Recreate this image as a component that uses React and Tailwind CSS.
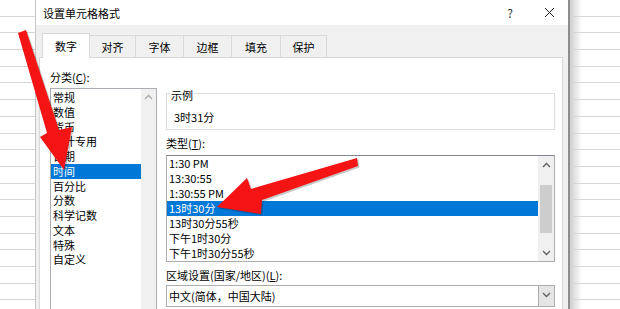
import React from "react";

const categories = ["常规", "数值", "货币", "会计专用", "日期", "时间", "百分比", "分数", "科学记数", "文本", "特殊", "自定义"];
const types = ["1:30 PM", "13:30:55", "1:30:55 PM", "13时30分", "13时30分55秒", "下午1时30分", "下午1时30分55秒"];
const tabs = [
  { label: "数字", w: "w-[48px]", active: true },
  { label: "对齐", w: "w-[46px]" },
  { label: "字体", w: "w-[48px]" },
  { label: "边框", w: "w-[48px]" },
  { label: "填充", w: "w-[49px]" },
  { label: "保护", w: "w-[46px]" },
];

// sheet rows peeking out beside the dialog
function SheetStrip({ className }) {
  return (
    <div className={className}>
      {Array.from({ length: 19 }).map((_, i) => (
        <div key={i} className="h-[16.7px] border-b border-[#d6d6d6]" />
      ))}
    </div>
  );
}

function Chevron({ up, color = "#606060" }) {
  return (
    <svg width="9" height="6" viewBox="0 0 9 6">
      <polyline
        points={up ? "1,5 4.5,1.5 8,5" : "1,1 4.5,4.5 8,1"}
        fill="none"
        stroke={color}
        strokeWidth="1.3"
      />
    </svg>
  );
}

const arrowA = "18,33 26,30 59,130 72,127 64,170 40,137 47,133";
const arrowB = "357,158 358,166 262,200 261,214 217,207 247,178 251,189";

function Arrows() {
  return (
    <svg className="absolute inset-0 pointer-events-none" width="620" height="309" viewBox="0 0 620 309">
      <g fill="rgba(0,0,0,0.22)" transform="translate(1.5,1.5)">
        <polygon points={arrowA} />
        <polygon points={arrowB} />
      </g>
      <g fill="#f41414">
        <polygon points={arrowA} />
        <polygon points={arrowB} />
      </g>
    </svg>
  );
}

export default function App() {
  return (
    <div className="relative w-[620px] h-[309px] overflow-hidden flex bg-white text-black text-[11px] font-['Noto_Sans_CJK_SC','Noto_Sans',sans-serif]">
      <SheetStrip className="w-[36px] shrink-0 bg-white border-r border-[#c4c4c4]" />

      {/* dialog */}
      <div className="w-[534px] shrink-0 flex flex-col border-r-2 border-[#8e8e8e]">
        <div className="h-[25px] shrink-0 bg-white flex items-center pl-[7px]">
          <span className="leading-[14px]">设置单元格格式</span>
          <span className="ml-auto mr-[31px] text-[12px] leading-[14px] text-[#333]">?</span>
          <svg width="11" height="11" viewBox="0 0 11 11" className="mr-[13px]">
            <path d="M1 1 L10 10 M10 1 L1 10" stroke="#222" strokeWidth="1" />
          </svg>
        </div>

        <div className="flex-1 flex flex-col bg-[#f0f0f0] pl-[3px] pr-[5px]">
          {/* tabs */}
          <div className="h-[32px] shrink-0 flex items-end pl-[3px]">
            {tabs.map((t) =>
              t.active ? (
                <div
                  key={t.label}
                  className={`${t.w} h-[25px] relative z-10 -mb-[1px] bg-white border border-b-0 border-[#d9d9d9] flex items-center justify-center leading-[14px]`}
                >
                  {t.label}
                </div>
              ) : (
                <div
                  key={t.label}
                  className={`${t.w} h-[22px] border border-l-0 border-b-0 border-[#d9d9d9] bg-[#f0f0f0] flex items-center justify-center leading-[14px]`}
                >
                  {t.label}
                </div>
              )
            )}
          </div>

          {/* panel */}
          <div className="flex-1 bg-white border border-[#d9d9d9] flex pl-[10px] gap-[9px]">
            {/* category list */}
            <div className="w-[107px] shrink-0 pt-[12px] flex flex-col">
              <div className="h-[14px] leading-[14px]">
                分类(<span className="underline">C</span>):
              </div>
              <div className="mt-[4px] h-[240px] border border-[#abadb3] flex">
                <div className="flex-1 pt-[1px] flex flex-col">
                  {categories.map((c) => (
                    <div
                      key={c}
                      className={`h-[14.75px] leading-[14.75px] pl-[2px] ${c === "时间" ? "bg-[#0078d7] text-white" : ""}`}
                    >
                      {c}
                    </div>
                  ))}
                </div>
                <div className="w-[15px] bg-[#f0f0f0] flex justify-center pt-[5px]">
                  <Chevron up color="#a8a8a8" />
                </div>
              </div>
            </div>

            {/* right column */}
            <div className="w-[389px] shrink-0 pt-[35px] flex flex-col">
              <div className="relative h-[37px] border border-[#dcdcdc] pl-[7px] pt-[16px]">
                <span className="absolute -top-[6px] left-[3px] px-[1px] bg-white leading-[14px]">示例</span>
                <div className="leading-[14px]">3时31分</div>
              </div>

              <div className="mt-[6px] h-[14px] leading-[14px]">
                类型(<span className="underline">T</span>):
              </div>
              <div className="mt-[5px] h-[107px] border border-[#abadb3] border-t-[#828790] flex">
                <div className="flex-1 flex flex-col">
                  {types.map((t) => (
                    <div
                      key={t}
                      className={`h-[15px] leading-[15px] pl-[2px] ${t === "13时30分" ? "bg-[#0078d7] text-white" : ""}`}
                    >
                      {t}
                    </div>
                  ))}
                </div>
                <div className="w-[16px] bg-[#f0f0f0] flex flex-col items-center">
                  <div className="h-[17px] flex items-center">
                    <Chevron up />
                  </div>
                  <div className="mt-[12px] w-[12px] h-[48px] bg-[#cdcdcd]" />
                  <div className="mt-auto h-[16px] flex items-center">
                    <Chevron />
                  </div>
                </div>
              </div>

              <div className="mt-[6px] h-[14px] leading-[14px]">
                区域设置(国家/地区)(<span className="underline">L</span>):
              </div>
              <div className="mt-[3px] h-[22px] border border-[#adadad] flex">
                <div className="flex-1 pl-[2px] leading-[20px]">中文(简体，中国大陆)</div>
                <div className="w-[16px] bg-[#e5e5e5] border-l border-[#adadad] flex justify-center pt-[6px]">
                  <Chevron />
                </div>
              </div>
            </div>
          </div>
        </div>
      </div>

      <SheetStrip className="flex-1 bg-[linear-gradient(to_right,#cfcfcf,#ffffff_12px)]" />

      <Arrows />
    </div>
  );
}
